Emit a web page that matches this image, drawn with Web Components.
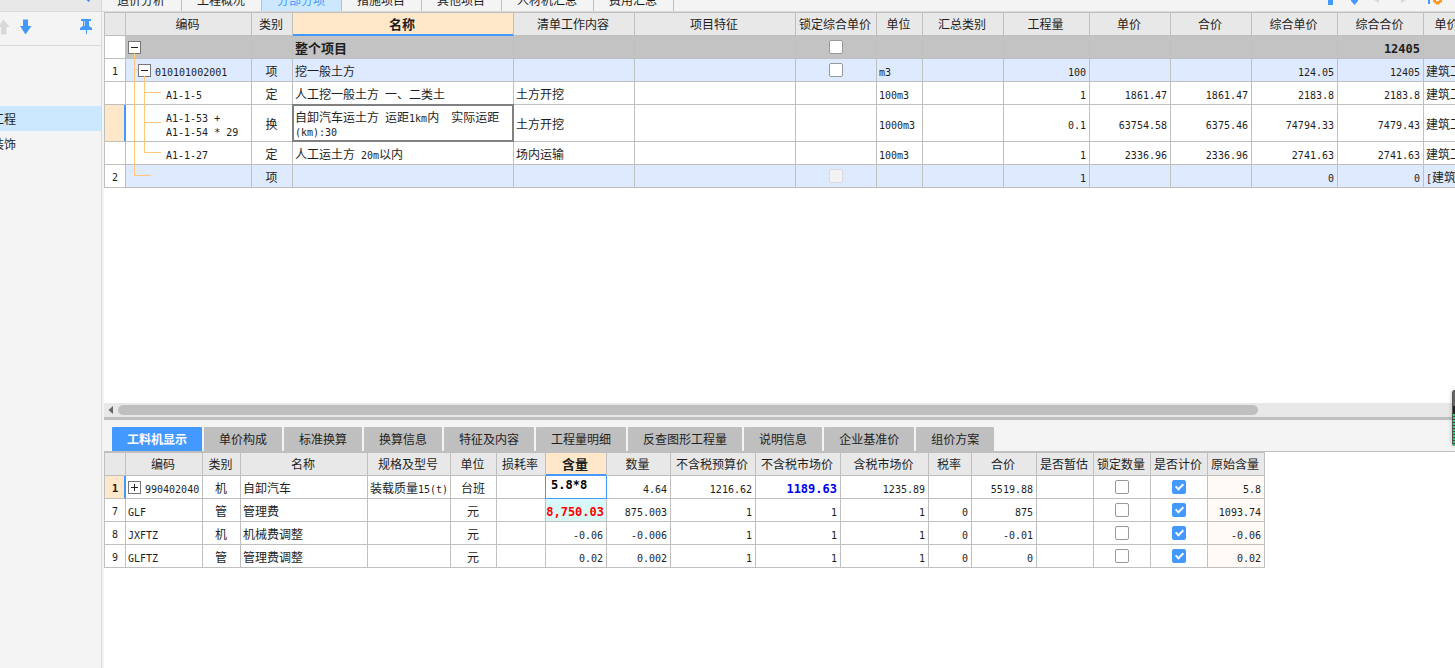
<!DOCTYPE html>
<html lang="zh-CN">
<head>
<meta charset="utf-8">
<title>分部分项</title>
<style>
html, body { margin: 0; height: 100%; }
body {
  font: 12px/14px "Noto Sans CJK SC", "Noto Sans", sans-serif;
  color: #1e1e1e; background: #fff; overflow: hidden;
  --line: #bfbfbf; --head: #e8e8e8; --bar: #f4f4f4; --blue: #4499ff; --pale: #cce8ff; --warm: #ffe7c9;
}
</style>
</head>
<body>
<cost-app></cost-app>
<script>
function define(name, html, setup) {
  const tpl = document.createElement('template');
  tpl.innerHTML = '<style>*{box-sizing:border-box}</style>' + html;
  customElements.define(name, class extends HTMLElement {
    constructor() {
      super();
      this.attachShadow({ mode: 'open' }).append(tpl.content.cloneNode(true));
    }
    connectedCallback() {
      if (setup && !this.ready) { this.ready = true; setup.call(this, this.shadowRoot); }
    }
  });
}

define('side-panel', `
<style>
:host { display: flex; flex-direction: column; background: var(--bar); border-right: 1px solid #d9d9d9; overflow: hidden; }
.cap { height: 12px; background: var(--head); border-bottom: 1px solid #d9d9d9; display: flex; justify-content: flex-end; padding-right: 10px; flex: none; }
.cap svg { width: 6px; height: 2px; }
.tools { height: 34px; border-bottom: 1px solid #d9d9d9; display: flex; align-items: center; flex: none; padding: 0 8px 3px 0; }
button { border: 0; padding: 0; background: none; display: flex; }
.pin { margin-left: auto; }
nav { padding-top: 60px; }
a { display: flex; justify-content: flex-end; align-items: center; height: 25px; color: inherit; text-decoration: none; }
a span { display: flex; justify-content: flex-end; width: 16px; margin-right: auto; overflow: hidden; white-space: nowrap; flex: none; }
a[aria-current] { background: var(--pale); }
</style>
<div class="cap"><svg viewBox="0 0 6 2"><path d="M2 0h3v1H4v1H3V1H2z" fill="#4499ff"/></svg></div>
<div class="tools">
  <button aria-label="上移"><svg width="20" height="16"><path d="M3.5 0.5L9.5 8H6.500V15.500H1V8H-2z" fill="#d9d9d9"/></svg></button>
  <button aria-label="下移"><svg width="14" height="16"><path d="M3 0.500H8V7H11.500L5.500 15.500L0 7H3z" fill="#4499ff"/></svg></button>
  <button class="pin" aria-label="固定"><svg width="13" height="16"><path d="M1 0H11V2H9V7L12 9V11H7V15H6V11H0V9L3 7V2H1z" fill="#4499ff"/><path d="M4.500 2v5" stroke="#b5d6ff"/></svg></button>
</div>
<nav><a href="#civil" aria-current="page"><span>工程</span></a><a href="#decor"><span>装饰</span></a></nav>
`);

define('main-tabs', `
<style>
:host { display: flex; align-items: flex-end; height: 12px; background: var(--bar); border-bottom: 1px solid #d9d9d9; overflow: hidden; }
.tools { margin-left: auto; display: flex; align-items: flex-end; height: 11px; padding-right: 13px; }
svg { width: 114px; height: 11px; }
</style>
<slot></slot>
<div class="tools"><svg viewBox="0 0 114 11">
<path d="M0 0h5v5H0zM23 0h7v1l-3.500 4L23 1zM100 0h2v4h-2z" fill="#4499ff"/>
<path d="M46 0h5v3zM73 0h5l-5 3z" fill="#d9d9d9"/>
<path d="M105 0h9v2l-2 1-1 1.500h-3l-1-1.500-2-1z" fill="#ff9922"/><path d="M108 0h3v1h-3z" fill="#fff"/>
</svg></div>
`);

define('main-tab', `
<style>
:host { display: block; flex: none; }
button { font: inherit; line-height: 22px; height: 22px; color: inherit; background: var(--bar); border: 0; border-right: 1px solid var(--line); padding: 0 16px 0 15px; display: block; }
:host([selected]) button { background: var(--pale); color: var(--blue); }
</style>
<button><slot></slot></button>
`);

define('detail-tabs', `
<style>
:host { display: flex; align-items: flex-end; gap: 2px; height: 32px; padding-left: 8px; background: var(--bar); border-bottom: 1px solid var(--line); }
</style>
<slot></slot>
`);

define('detail-tab', `
<style>
:host { display: block; flex: none; }
button { display: block; font: inherit; line-height: 24px; height: 24px; color: inherit; background: var(--line); border: 0; border-radius: 1px 1px 0 0; padding: 0 15px; }
:host([selected]) button { background: var(--blue); color: #fff; font-weight: bold; }
</style>
<button><slot></slot></button>
`);

define('h-scroll', `
<style>
:host { display: flex; align-items: center; height: 14px; background: var(--head); flex: none; }
svg { width: 14px; height: 14px; flex: none; }
i { flex: 1140; height: 10px; border-radius: 5px; background: var(--line); }
b { flex: 197; }
</style>
<svg><path d="M9 3v8L4.500 7z" fill="#666"/></svg><i></i><b></b>
`);

define('level-meter', `
<style>
:host { position: absolute; right: 0; top: 390px; width: 3px; height: 56px; border-radius: 3px 0 0 3px; box-shadow: 0 0 4px #0004;
  border-left: 1px solid #555; background: linear-gradient(#666 0 16px, #222 16px 24px, transparent 24px), repeating-linear-gradient(#2ed573 0 2px, #444 2px 3px); }
</style>
`);

/* Grid whose columns and rows come from the sheet named by its attribute. */
define('data-grid', `
<style>
:host { display: block; overflow: hidden; background: #fff; }
table { table-layout: fixed; border-collapse: separate; border-spacing: 0; border: solid var(--line); border-width: 1px 0 0 1px; width: 0; }
th, td { height: 23px; padding: 2px 3px 0 2px; border: solid var(--line); border-width: 0 1px 1px 0; font-weight: normal; white-space: pre; text-align: left; line-height: 14px; }
thead th { background: var(--head); text-align: center; padding: 0 2px 0 0; }
thead th.on { background: var(--warm); font-weight: bold; font-size: 13px; border-bottom-color: var(--blue); box-shadow: inset 0 -1px var(--blue); }
tbody th { text-align: center; padding: 0; }
tbody th.on { background: var(--warm); border-right-color: var(--blue); box-shadow: inset -1px 0 var(--blue); }
.n { font: 10px/10px "DejaVu Sans Mono", monospace; }
.c { text-align: center; }
.r { text-align: right; }
.bold { font-weight: bold; font-size: 13px; }
.bold .n, .strong .n { font-weight: bold; font-size: 12px; }
tbody th.on.strong .n { font-size: 11px; }
.gray td { background: #c3c3c3; }
.blue td { background: #deeaff; }
.tall td { height: 37px; }
td.sel { border-color: #808080; box-shadow: -1px 0 #808080, 0 -1px #808080, -1px -1px #808080, inset 0 0 0 1px #808080; position: relative; }
.cream { background: #fffaf5; }
.cyan { background: #d9f8f8; color: #f00; padding-left: 0; padding-right: 2px; }
.navy { color: #00e; }
td.node { padding-top: 0; }
td.root { position: relative; z-index: 1; }
.wrap { display: flex; align-items: center; gap: 4px; }
.l0 { padding-left: 0; } .l1 { padding-left: 10px; } .l2 { padding-left: 38px; }
.wrap > span { padding-top: 2px; }
.exp { width: 13px; height: 13px; padding: 0; border: 1px solid #777; background: #fff; display: block; flex: none; }
.exp svg { display: block; }
.guide { position: absolute; left: 0; top: 0; width: 40px; height: 142px; pointer-events: none; fill: none; stroke: #ffc878; }
input[type=checkbox] { appearance: none; width: 14px; height: 14px; margin: 0 auto; border: 1px solid #999; border-radius: 2px; background: #fff; display: block; position: relative; }
td.box { padding: 0; }
input[type=checkbox]:disabled { border-color: #d9d9d9; background: #f3f3f3; }
input[type=checkbox]:checked { background: var(--blue); border-color: var(--blue); }
input:checked::after { content: ""; position: absolute; left: 4px; top: 1px; width: 3px; height: 6px; border: solid #fff; border-width: 0 2px 2px 0; transform: rotate(45deg); }
td.edit { padding: 0; border-color: var(--blue); box-shadow: -1px 0 var(--blue); }
.edit input { display: block; width: 100%; height: 22px; border: 0; outline: 0; padding: 0 5px 4px; margin: 0; background: none; color: #000; font: bold 12px/14px "DejaVu Sans Mono", monospace; }
</style>
<table><colgroup></colgroup><thead><tr></tr></thead><tbody></tbody></table>
`, function (root) {
  const sheet = sheets[this.getAttribute('sheet')];
  const text = s => s.replace(/[\x20-\x7e]+/g, m => `<span class="n">${m}</span>`.replace('|', '<br>'));
  const sign = plus => `<button class="exp" aria-label="${plus ? '展开' : '收起'}"><svg width="11" height="11"><path d="M2 5.500h7${plus ? 'M5.500 2v7' : ''}" stroke="#222"/></svg></button>`;
  root.querySelector('colgroup').innerHTML = sheet.cols.map(c => `<col style="width:${c[1]}px">`).join('');
  root.querySelector('thead tr').innerHTML = sheet.cols.map((c, i) =>
    `<th scope="col" class="${i === sheet.active ? 'on' : ''}">${c[0]}</th>`).join('');
  root.querySelector('tbody').innerHTML = sheet.rows.map(row => {
    const cells = row.cells.map((v, i) => {
      if (i === 0) return `<th scope="row" class="${row.mark || ''}">${text(v)}</th>`;
      const [title, , kind] = sheet.cols[i];
      let cls = kind || '';
      if (row.style && row.style[i]) cls += ' ' + row.style[i];
      if (kind === 'box') {
        const inner = v ? `<input type="checkbox" aria-label="${title}"${v === 'on' ? ' checked' : v === 'dim' ? ' disabled' : ''}>` : '';
        return `<td class="${cls}">${inner}</td>`;
      }
      if (/edit/.test(cls)) return `<td class="${cls}"><input type="text" aria-label="${title}" value="${v}"></td>`;
      if (i === 1 && row.level !== undefined) {
        const guide = row.guide ? '<svg class="guide"><path d="M8.500 17V139.500H25M8.500 33.500H12M18.500 40V116.500H35M18.500 56.500H35M18.500 86.500H35"/></svg>' : '';
        return `<td class="node${row.guide ? ' root' : ''}">${guide}<div class="wrap l${row.level}">${row.sign ? sign(row.sign === '+') : ''}<span>${text(v)}</span></div></td>`;
      }
      return `<td class="${cls}">${text(v)}</td>`;
    });
    return `<tr class="${row.cls || ''}">${cells.join('')}</tr>`;
  }).join('');
});

const sheets = {
  items: {
    active: 3,
    cols: [['', 21], ['编码', 126], ['类别', 41, 'c'], ['名称', 221], ['清单工作内容', 121], ['项目特征', 161], ['锁定综合单价', 81, 'box'], ['单位', 46], ['汇总类别', 81], ['工程量', 86, 'r'], ['单价', 81, 'r'], ['合价', 81, 'r'], ['综合单价', 86, 'r'], ['综合合价', 86, 'r'], ['单价构成文件', 96]],
    rows: [
      { cls: 'gray', level: 0, sign: '-', guide: true, style: { 3: 'bold', 13: 'bold' }, cells: ['', '', '', '整个项目', '', '', 'off', '', '', '', '', '', '', '12405', ''] },
      { cls: 'blue', level: 1, sign: '-', cells: ['1', '010101002001', '项', '挖一般土方', '', '', 'off', 'm3', '', '100', '', '', '124.05', '12405', '建筑工程'] },
      { level: 2, cells: ['', 'A1-1-5', '定', '人工挖一般土方 一、二类土', '土方开挖', '', '', '100m3', '', '1', '1861.47', '1861.47', '2183.8', '2183.8', '建筑工程'] },
      { cls: 'tall', level: 2, mark: 'on', style: { 3: 'sel' }, cells: ['', 'A1-1-53 +|A1-1-54 * 29', '换', '自卸汽车运土方 运距1km内  实际运距|(km):30', '土方开挖', '', '', '1000m3', '', '0.1', '63754.58', '6375.46', '74794.33', '7479.43', '建筑工程'] },
      { level: 2, cells: ['', 'A1-1-27', '定', '人工运土方 20m以内', '场内运输', '', '', '100m3', '', '1', '2336.96', '2336.96', '2741.63', '2741.63', '建筑工程'] },
      { cls: 'blue', cells: ['2', '', '项', '', '', '', 'dim', '', '', '1', '', '', '0', '0', '[建筑工程]'] }
    ]
  },
  detail: {
    active: 7,
    cols: [['', 21], ['编码', 77], ['类别', 38, 'c'], ['名称', 127], ['规格及型号', 83], ['单位', 46, 'c'], ['损耗率', 49], ['含量', 61, 'r'], ['数量', 64, 'r'], ['不含税预算价', 85, 'r'], ['不含税市场价', 85, 'r'], ['含税市场价', 88, 'r'], ['税率', 43, 'r'], ['合价', 65, 'r'], ['是否暂估', 57], ['锁定数量', 57, 'box'], ['是否计价', 57, 'box'], ['原始含量', 57, 'r cream']],
    rows: [
      { level: 0, sign: '+', mark: 'on strong', style: { 7: 'edit', 10: 'strong navy' }, cells: ['1', '990402040', '机', '自卸汽车', '装载质量15(t)', '台班', '', '5.8*8', '4.64', '1216.62', '1189.63', '1235.89', '', '5519.88', '', 'off', 'on', '5.8'] },
      { style: { 7: 'strong cyan' }, cells: ['7', 'GLF', '管', '管理费', '', '元', '', '8,750.03', '875.003', '1', '1', '1', '0', '875', '', 'off', 'on', '1093.74'] },
      { cells: ['8', 'JXFTZ', '机', '机械费调整', '', '元', '', '-0.06', '-0.006', '1', '1', '1', '0', '-0.01', '', 'off', 'on', '-0.06'] },
      { cells: ['9', 'GLFTZ', '管', '管理费调整', '', '元', '', '0.02', '0.002', '1', '1', '1', '0', '0', '', 'off', 'on', '0.02'] }
    ]
  }
};

define('cost-app', `
<style>
:host { display: grid; grid-template-columns: 102px minmax(0, 1fr); height: 100vh; position: relative; overflow: hidden; }
main { display: flex; flex-direction: column; min-width: 0; background: linear-gradient(90deg, var(--bar) 2px, #fff 2px); }
.body { flex: 1; display: flex; flex-direction: column; min-height: 0; margin-left: 2px; }
.upper { flex: 1; min-height: 0; }
.split { height: 3px; background: var(--line); flex: none; }
.lower { flex: none; height: 248px; }
</style>
<side-panel></side-panel>
<main>
  <main-tabs>
    <main-tab>造价分析</main-tab><main-tab>工程概况</main-tab><main-tab selected>分部分项</main-tab><main-tab>措施项目</main-tab><main-tab>其他项目</main-tab><main-tab>人材机汇总</main-tab><main-tab>费用汇总</main-tab>
  </main-tabs>
  <div class="body">
    <data-grid class="upper" sheet="items"></data-grid>
    <h-scroll></h-scroll>
    <div class="split"></div>
    <div class="lower">
      <detail-tabs>
        <detail-tab selected>工料机显示</detail-tab><detail-tab>单价构成</detail-tab><detail-tab>标准换算</detail-tab><detail-tab>换算信息</detail-tab><detail-tab>特征及内容</detail-tab><detail-tab>工程量明细</detail-tab><detail-tab>反查图形工程量</detail-tab><detail-tab>说明信息</detail-tab><detail-tab>企业基准价</detail-tab><detail-tab>组价方案</detail-tab>
      </detail-tabs>
      <data-grid sheet="detail"></data-grid>
    </div>
  </div>
</main>
<level-meter></level-meter>
`);
</script>
</body>
</html>
